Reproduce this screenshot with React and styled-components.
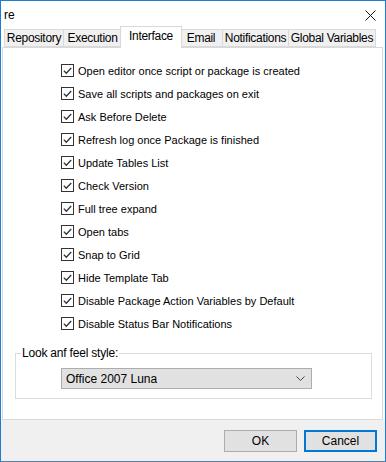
import React from "react";
import styled, { createGlobalStyle } from "styled-components";

const Global = createGlobalStyle`
  html, body { margin: 0; padding: 0; background: #ffffff; }
  body { font-family: "Liberation Sans", Arial, sans-serif; }
  * { box-sizing: border-box; }
`;

const Window = styled.div`
  width: 386px;
  height: 462px;
  border: 1px solid #1a7ed4;
  border-bottom-color: #5a7fa6;
  background: #ffffff;
  display: flex;
  flex-direction: column;
  overflow: hidden;
`;

const TitleBar = styled.div`
  height: 26px;
  flex: none;
  display: flex;
  align-items: center;
  justify-content: space-between;
  padding: 0 9px 0 3px;
  font-size: 12px;
  color: #000;
`;

const Title = styled.span`
  font-family: "Liberation Sans", Arial, sans-serif;
  font-size: 12px;
  margin-top: 1px;
`;

const CloseIcon = styled.svg`
  width: 11px;
  height: 11px;
  display: block;
  margin-top: 2px;
`;

const Body = styled.div`
  flex: 1;
  display: flex;
  flex-direction: column;
  padding: 0 2px 0 1px;
`;

const TabStrip = styled.div`
  height: 20px;
  display: flex;
  align-items: flex-end;
  padding-left: 2px;
  position: relative;
  z-index: 1;
`;

const Tab = styled.div`
  width: ${(p) => p.$w}px;
  height: ${(p) => (p.$active ? 22 : 18)}px;
  margin-bottom: ${(p) => (p.$active ? -1 : 0)}px;
  margin-left: ${(p) => (p.$active ? -2 : 0)}px;
  margin-right: ${(p) => (p.$active ? -2 : 0)}px;
  background: ${(p) => (p.$active ? "#ffffff" : "#f0f0f0")};
  border: 1px solid #d9d9d9;
  border-left-width: ${(p) => (p.$first || p.$active ? 1 : 0)}px;
  border-bottom: ${(p) => (p.$active ? "none" : "1px solid #d9d9d9")};
  display: flex;
  align-items: ${(p) => (p.$active ? "flex-start" : "center")};
  padding-top: ${(p) => (p.$active ? 2 : 0)}px;
  justify-content: center;
  font-size: 12px;
  letter-spacing: -0.3px;
  color: #000;
  white-space: nowrap;
  position: relative;
  z-index: ${(p) => (p.$active ? 2 : 1)};
`;

const Panel = styled.div`
  height: 373px;
  flex: none;
  border: 1px solid #d9d9d9;
  background: #ffffff;
  display: flex;
  flex-direction: column;
`;

const OptionList = styled.div`
  display: flex;
  flex-direction: column;
  padding: 11px 0 0 58px;
`;

const OptionRow = styled.label`
  height: 23px;
  display: flex;
  align-items: center;
  gap: 4px;
  font-family: "Liberation Sans", Arial, sans-serif;
  font-size: 11px;
  color: #000;
`;

const Box = styled.span`
  width: 13px;
  height: 13px;
  flex: none;
  border: 1px solid #333333;
  background: #ffffff;
  display: flex;
  align-items: center;
  justify-content: center;
`;

const Group = styled.fieldset`
  margin: 11px 0 0 12px;
  width: 357px;
  height: 53px;
  border: 1px solid #dcdcdc;
  padding: 9px 0 0 5px;
  min-width: 0;
`;

const Legend = styled.legend`
  padding: 0 1px;
  margin-left: 0;
  font-size: 12px;
  color: #000;
  letter-spacing: -0.2px;
`;

const Combo = styled.div`
  width: 251px;
  height: 21px;
  margin: -1px 0 0 40px;
  background: #e1e1e1;
  border: 1px solid #adadad;
  display: flex;
  align-items: center;
  justify-content: space-between;
  padding: 0 6px 0 4px;
  font-size: 12px;
  color: #000;
`;

const Footer = styled.div`
  flex: 1;
  background: #f0f0f0;
  margin: 0 -2px 0 -1px;
  display: flex;
  justify-content: flex-end;
  align-items: flex-start;
  gap: 7px;
  padding: 10px 8px 0 0;
`;

const Button = styled.button`
  width: 73px;
  height: 22px;
  background: #e1e1e1;
  border: 1px solid ${(p) => (p.$default ? "#0078d7" : "#adadad")};
  box-shadow: ${(p) => (p.$default ? "inset 0 0 0 1px #0078d7" : "none")};
  font-family: "Liberation Sans", Arial, sans-serif;
  font-size: 12px;
  color: #000;
  padding: 0;
  margin: 0;
`;

const Check = () => (
  <svg width="9" height="8" viewBox="0 0 9 8">
    <path d="M0.8 3.6 L3.3 6.2 L8.2 1" fill="none" stroke="#333" strokeWidth="1.3" />
  </svg>
);

const tabs = [
  { label: "Repository", w: 60 },
  { label: "Execution", w: 58 },
  { label: "Interface", w: 62, active: true },
  { label: "Email", w: 43 },
  { label: "Notifications", w: 66 },
  { label: "Global Variables", w: 87 },
];

const options = [
  "Open editor once script or package is created",
  "Save all scripts and packages on exit",
  "Ask Before Delete",
  "Refresh log once Package is finished",
  "Update Tables List",
  "Check Version",
  "Full tree expand",
  "Open tabs",
  "Snap to Grid",
  "Hide Template Tab",
  "Disable Package Action Variables by Default",
  "Disable Status Bar Notifications",
];

export default function App() {
  return (
    <>
      <Global />
      <Window>
        <TitleBar>
          <Title>re</Title>
          <CloseIcon viewBox="0 0 11 11">
            <path d="M0.5 0.5 L10.5 10.5 M10.5 0.5 L0.5 10.5" stroke="#111" strokeWidth="1" />
          </CloseIcon>
        </TitleBar>
        <Body>
          <TabStrip>
            {tabs.map((t, i) => (
              <Tab key={t.label} $w={t.w} $active={t.active} $first={i === 0}>
                {t.label}
              </Tab>
            ))}
          </TabStrip>
          <Panel>
            <OptionList>
              {options.map((o) => (
                <OptionRow key={o}>
                  <Box>
                    <Check />
                  </Box>
                  {o}
                </OptionRow>
              ))}
            </OptionList>
            <Group>
              <Legend>Look anf feel style:</Legend>
              <Combo>
                <span>Office 2007 Luna</span>
                <svg width="9" height="5" viewBox="0 0 9 5">
                  <path d="M0.5 0.5 L4.5 4.5 L8.5 0.5" fill="none" stroke="#444" strokeWidth="1" />
                </svg>
              </Combo>
            </Group>
          </Panel>
          <Footer>
            <Button>OK</Button>
            <Button $default>Cancel</Button>
          </Footer>
        </Body>
      </Window>
    </>
  );
}
